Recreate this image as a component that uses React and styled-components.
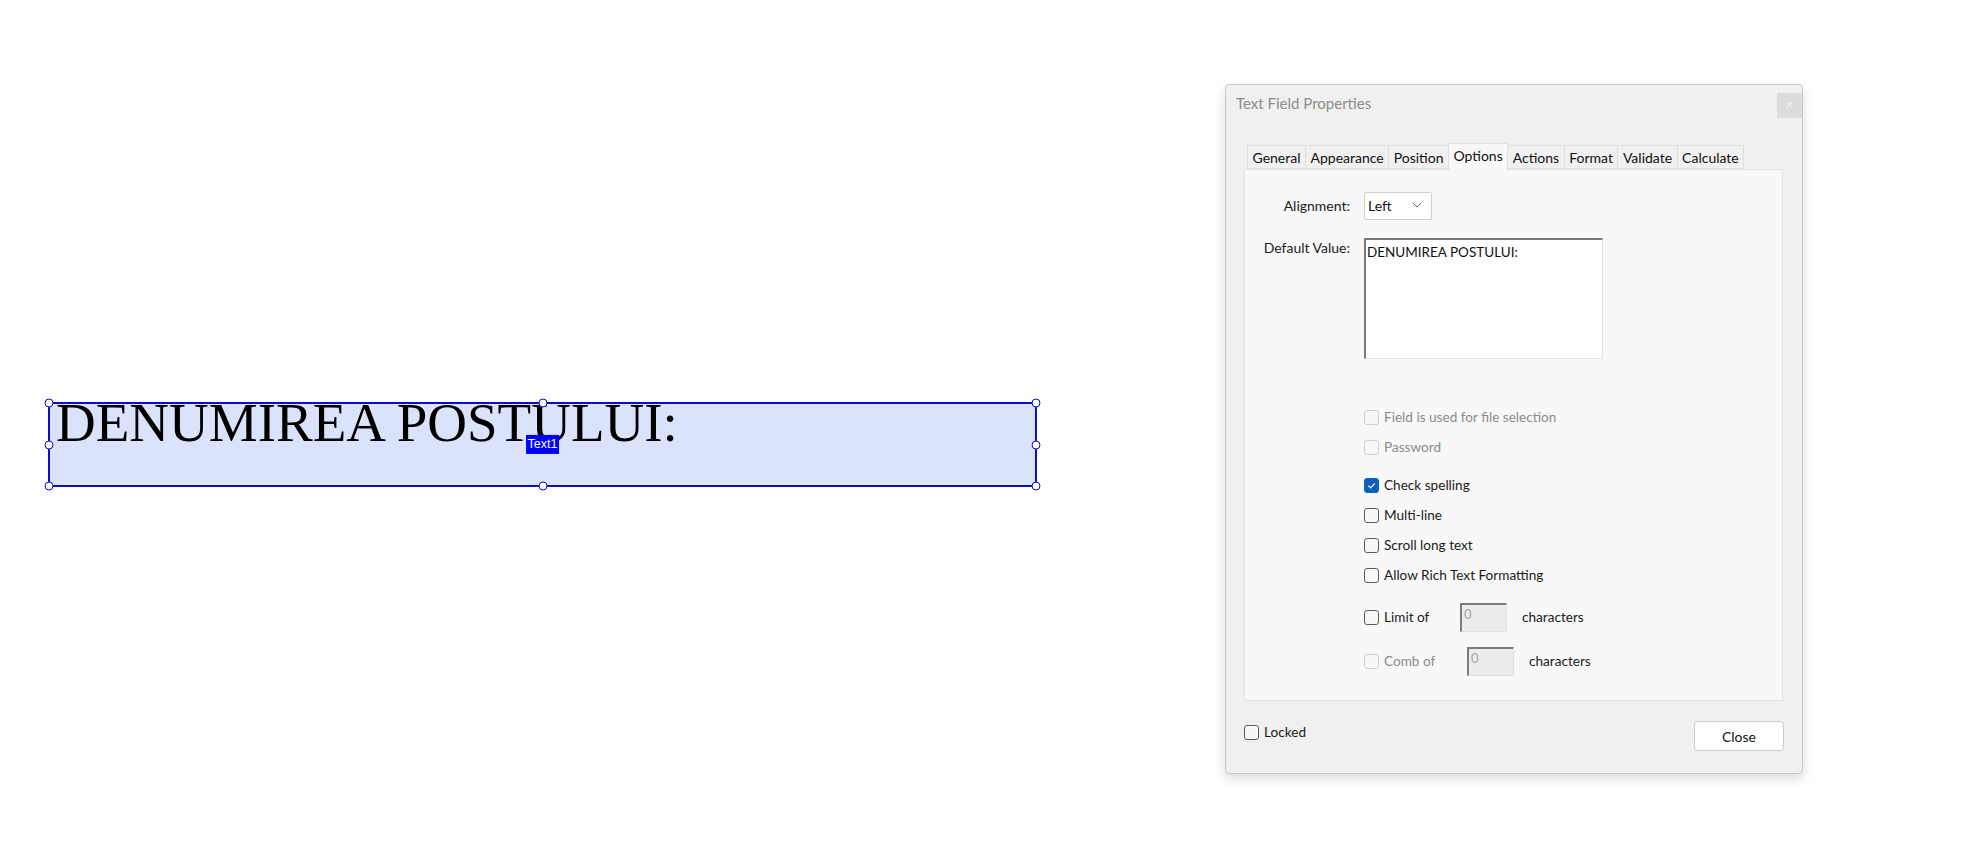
import React from "react";
import styled, { createGlobalStyle } from "styled-components";

const Global = createGlobalStyle`
  html, body { margin: 0; padding: 0; background: #ffffff; }
  body { width: 1970px; height: 852px; overflow: hidden; font-family: Lato, "Open Sans", sans-serif; }
  * { box-sizing: border-box; }
`;

const Canvas = styled.div`
  position: relative;
  width: 1970px;
  height: 852px;
  background: #ffffff;
`;

/* ---------- form field on the page ---------- */
const FormField = styled.div`
  position: absolute;
  left: 48px;
  top: 402px;
  width: 989px;
  height: 85px;
  border: 2px solid #0d0dc8;
  background: #dbe2fc;
  padding-left: 6px;
`;

const FieldText = styled.div`
  font-family: "Liberation Serif", "Times New Roman", serif;
  font-size: 55px;
  line-height: 55px;
  color: #000;
  margin-top: -9px;
  white-space: nowrap;
`;

const HandleLayer = styled.div`
  position: absolute;
  inset: -1px;
  pointer-events: none;
`;

const Handle = styled.span`
  position: absolute;
  left: ${(p) => p.$x};
  top: ${(p) => p.$y};
  width: 9px;
  height: 9px;
  border-radius: 50%;
  background: #fff;
  border: 1.5px solid #0d0dc8;
  transform: translate(-50%, -50%);
`;

const NameTag = styled.span`
  position: absolute;
  left: 50%;
  top: 50%;
  transform: translate(-50%, -53%);
  background: #0000ff;
  color: #fff;
  font-family: "Liberation Sans", Arial, sans-serif;
  font-size: 12.5px;
  line-height: 19px;
  padding: 0 2px;
`;

/* ---------- dialog ---------- */
const Dialog = styled.div`
  position: absolute;
  left: 1225px;
  top: 84px;
  width: 578px;
  height: 690px;
  background: #f0f0f0;
  border: 1px solid #c8c8c8;
  border-radius: 4px;
  box-shadow: 0 5px 12px rgba(0, 0, 0, 0.14);
  display: flex;
  flex-direction: column;
  color: #1b1b1b;
  font-family: Lato, "Open Sans", sans-serif;
`;

const TitleBar = styled.div`
  height: 58px;
  display: flex;
  justify-content: space-between;
  align-items: flex-start;
  padding-left: 10px;
`;

const Title = styled.div`
  margin-top: 9px;
  font-size: 15px;
  line-height: 18px;
  color: #8c8c8c;
`;

const CloseX = styled.div`
  margin-top: 8px;
  width: 25px;
  height: 25px;
  background: #dcdcdc;
  color: #f4f4f4;
  font-size: 12px;
  line-height: 24px;
  text-align: center;
  font-family: "Liberation Sans", Arial, sans-serif;
`;

const Body = styled.div`
  padding: 0 19px 0 18px;
`;

const TabRow = styled.div`
  display: flex;
  align-items: flex-end;
  padding-left: 3px;
  height: 26px;
  position: relative;
  z-index: 1;
`;

const Tab = styled.div`
  height: ${(p) => (p.$active ? "27px" : "24px")};
  padding: 0 4.5px;
  margin-right: -1px;
  border: 1px solid ${(p) => (p.$active ? "#e0e0e0" : "#dedede")};
  border-bottom: ${(p) => (p.$active ? "none" : "1px solid #e3e3e3")};
  background: ${(p) => (p.$active ? "#f8f8f8" : "#f0f0f0")};
  font-size: 14px;
  line-height: 23px;
  color: #111;
  white-space: nowrap;
  margin-bottom: ${(p) => (p.$active ? "-1px" : "0")};
  position: relative;
  z-index: ${(p) => (p.$active ? 2 : 1)};
`;

const Panel = styled.div`
  height: 532px;
  background: #f8f8f8;
  border: 1px solid #e3e3e3;
  padding-top: 22px;
`;

const FieldRow = styled.div`
  display: grid;
  grid-template-columns: 105px 1fr;
  column-gap: 14px;
  align-items: ${(p) => p.$align || "center"};
  margin-top: ${(p) => p.$mt || 0}px;
`;

const Label = styled.div`
  text-align: right;
  font-size: 14px;
  line-height: 18px;
  padding-top: ${(p) => p.$pt || 0}px;
  color: #1b1b1b;
`;

const Select = styled.div`
  width: 68px;
  height: 28px;
  background: #fff;
  border: 1px solid #cfcfcf;
  border-radius: 2px;
  display: flex;
  align-items: center;
  justify-content: space-between;
  padding: 0 9px 2px 3px;
  font-size: 14px;
  color: #111;
`;

const TextArea = styled.div`
  width: 239px;
  height: 121px;
  background: #fff;
  border: 1px solid #e2e2e2;
  border-top: 2px solid #7a7a7a;
  border-left: 2px solid #7a7a7a;
  padding: 3px 1px;
  font-size: 13.5px;
  line-height: 18px;
  color: #111;
`;

const Options = styled.div`
  margin-left: 119px;
  margin-top: 43px;
  display: flex;
  flex-direction: column;
`;

const OptionRow = styled.div`
  display: flex;
  align-items: center;
  height: 30px;
  margin-top: ${(p) => p.$mt || 0}px;
  font-size: 13.6px;
  color: ${(p) => (p.$disabled ? "#8b8b8b" : "#1b1b1b")};
`;

const Box = styled.span`
  width: 15px;
  height: 15px;
  flex: none;
  border-radius: 3px;
  border: 1px solid
    ${(p) => (p.$checked ? "#0f5fc1" : p.$disabled ? "#d0d0d0" : "#5c5c5c")};
  background: ${(p) => (p.$checked ? "#0f5fc1" : "#f8f8f8")};
  display: inline-flex;
  align-items: center;
  justify-content: center;
  margin-right: 5px;
`;

const OptText = styled.span`
  width: ${(p) => (p.$w ? p.$w + "px" : "auto")};
  line-height: 18px;
  white-space: nowrap;
`;

const SmallInput = styled.div`
  width: 47px;
  height: 29px;
  background: #ececec;
  border: 1px solid #e0e0e0;
  border-top: 2px solid #7c7c7c;
  border-left: 2px solid #7c7c7c;
  color: #a6a6a6;
  font-size: 13px;
  line-height: 16px;
  padding: 1px 2px;
  margin-right: ${(p) => p.$mr}px;
`;

const Chars = styled.span`
  color: #1b1b1b;
`;

const Footer = styled.div`
  display: flex;
  justify-content: space-between;
  align-items: flex-start;
  padding: 20px 18px 0 18px;
`;

const Locked = styled.div`
  display: flex;
  align-items: center;
  margin-top: 2px;
  font-size: 13.6px;
  color: #1b1b1b;
  line-height: 18px;
`;

const Button = styled.div`
  width: 90px;
  height: 30px;
  background: #fff;
  border: 1px solid #cbcbcb;
  border-radius: 4px;
  display: flex;
  align-items: center;
  justify-content: center;
  font-size: 14px;
  color: #111;
`;

const Check = () => (
  <svg width="9" height="9" viewBox="0 0 10 10">
    <path d="M1.5 5.2 L4 7.6 L8.6 2.6" fill="none" stroke="#fff" strokeWidth="1.3" />
  </svg>
);

const Chevron = () => (
  <svg width="10" height="6" viewBox="0 0 10 6">
    <path d="M0.8 0.8 L5 5 L9.2 0.8" fill="none" stroke="#666" strokeWidth="1" />
  </svg>
);

const Opt = ({ label, checked, disabled, mt, w, children }) => (
  <OptionRow $mt={mt} $disabled={disabled}>
    <Box $checked={checked} $disabled={disabled}>
      {checked && <Check />}
    </Box>
    <OptText $w={w}>{label}</OptText>
    {children}
  </OptionRow>
);

const tabs = ["General", "Appearance", "Position", "Options", "Actions", "Format", "Validate", "Calculate"];

const handles = [
  ["0%", "0%"], ["50%", "0%"], ["100%", "0%"],
  ["0%", "50%"], ["100%", "50%"],
  ["0%", "100%"], ["50%", "100%"], ["100%", "100%"],
];

export default function App() {
  return (
    <>
      <Global />
      <Canvas>
        <FormField>
          <FieldText>DENUMIREA POSTULUI:</FieldText>
          <HandleLayer>
            {handles.map(([x, y], i) => (
              <Handle key={i} $x={x} $y={y} />
            ))}
          </HandleLayer>
          <NameTag>Text1</NameTag>
        </FormField>

        <Dialog>
          <TitleBar>
            <Title>Text Field Properties</Title>
            <CloseX>×</CloseX>
          </TitleBar>
          <Body>
            <TabRow>
              {tabs.map((t) => (
                <Tab key={t} $active={t === "Options"}>
                  {t}
                </Tab>
              ))}
            </TabRow>
            <Panel>
              <FieldRow>
                <Label>Alignment:</Label>
                <Select>
                  <span>Left</span>
                  <Chevron />
                </Select>
              </FieldRow>
              <FieldRow $align="start" $mt={18}>
                <Label $pt={1}>Default Value:</Label>
                <TextArea>DENUMIREA POSTULUI:</TextArea>
              </FieldRow>
              <Options>
                <Opt label="Field is used for file selection" disabled />
                <Opt label="Password" disabled />
                <Opt label="Check spelling" checked mt={8} />
                <Opt label="Multi-line" />
                <Opt label="Scroll long text" />
                <Opt label="Allow Rich Text Formatting" />
                <Opt label="Limit of" mt={12} w={76}>
                  <SmallInput $mr={15}>0</SmallInput>
                  <Chars>characters</Chars>
                </Opt>
                <Opt label="Comb of" disabled mt={14} w={83}>
                  <SmallInput $mr={15}>0</SmallInput>
                  <Chars>characters</Chars>
                </Opt>
              </Options>
            </Panel>
          </Body>
          <Footer>
            <Locked>
              <Box />
              Locked
            </Locked>
            <Button>Close</Button>
          </Footer>
        </Dialog>
      </Canvas>
    </>
  );
}
